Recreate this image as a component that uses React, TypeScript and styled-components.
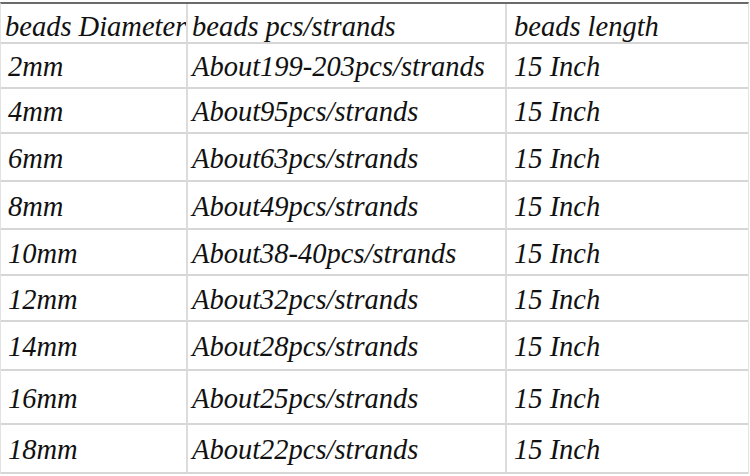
import React from 'react';
import styled, { createGlobalStyle } from 'styled-components';

const GlobalStyle = createGlobalStyle`
  html, body {
    margin: 0;
    padding: 0;
    background: #ffffff;
  }
`;

const Page = styled.div`
  width: 750px;
  height: 476px;
  padding-top: 2px;
  box-sizing: border-box;
  background: #ffffff;
  overflow: hidden;
`;

const Table = styled.div`
  display: grid;
  grid-template-columns: 187px 319px 1fr;
  border-top: 2px solid #6a6a6a;
  border-left: 1px solid #e2e2e2;
  border-right: 1px solid #e2e2e2;
  margin-right: 1px;
`;

const Cell = styled.div<{ $h: number; $pad: number; $top: number; $last?: boolean }>`
  height: ${p => p.$h}px;
  box-sizing: border-box;
  display: flex;
  align-items: center;
  padding-left: ${p => p.$pad}px;
  padding-top: ${p => p.$top}px;
  border-bottom: 2px solid #d6d6d6;
  border-right: ${p => (p.$last ? 'none' : '2px solid #dcdcdc')};
  font-family: 'Liberation Serif', 'Times New Roman', serif;
  font-style: italic;
  font-size: 28.5px;
  color: #111111;
  white-space: nowrap;
  overflow: hidden;
`;

const rows: [string, string, string, number][] = [
  ['beads Diameter', 'beads pcs/strands', 'beads length', 40],
  ['2mm', 'About199-203pcs/strands', '15 Inch', 45],
  ['4mm', 'About95pcs/strands', '15 Inch', 45],
  ['6mm', 'About63pcs/strands', '15 Inch', 48],
  ['8mm', 'About49pcs/strands', '15 Inch', 48],
  ['10mm', 'About38-40pcs/strands', '15 Inch', 46],
  ['12mm', 'About32pcs/strands', '15 Inch', 46],
  ['14mm', 'About28pcs/strands', '15 Inch', 49],
  ['16mm', 'About25pcs/strands', '15 Inch', 54],
  ['18mm', 'About22pcs/strands', '15 Inch', 49],
];

export default function App() {
  return (
    <>
      <GlobalStyle />
      <Page>
        <Table>
          {rows.map(([a, b, c, h], i) => {
            const top = i === 0 ? 8 : 3;
            return (
              <React.Fragment key={a}>
                <Cell $h={h} $pad={i === 0 ? 4 : 7} $top={top}>{a}</Cell>
                <Cell $h={h} $pad={4} $top={top}>{b}</Cell>
                <Cell $h={h} $pad={7} $top={top} $last>{c}</Cell>
              </React.Fragment>
            );
          })}
        </Table>
      </Page>
    </>
  );
}
